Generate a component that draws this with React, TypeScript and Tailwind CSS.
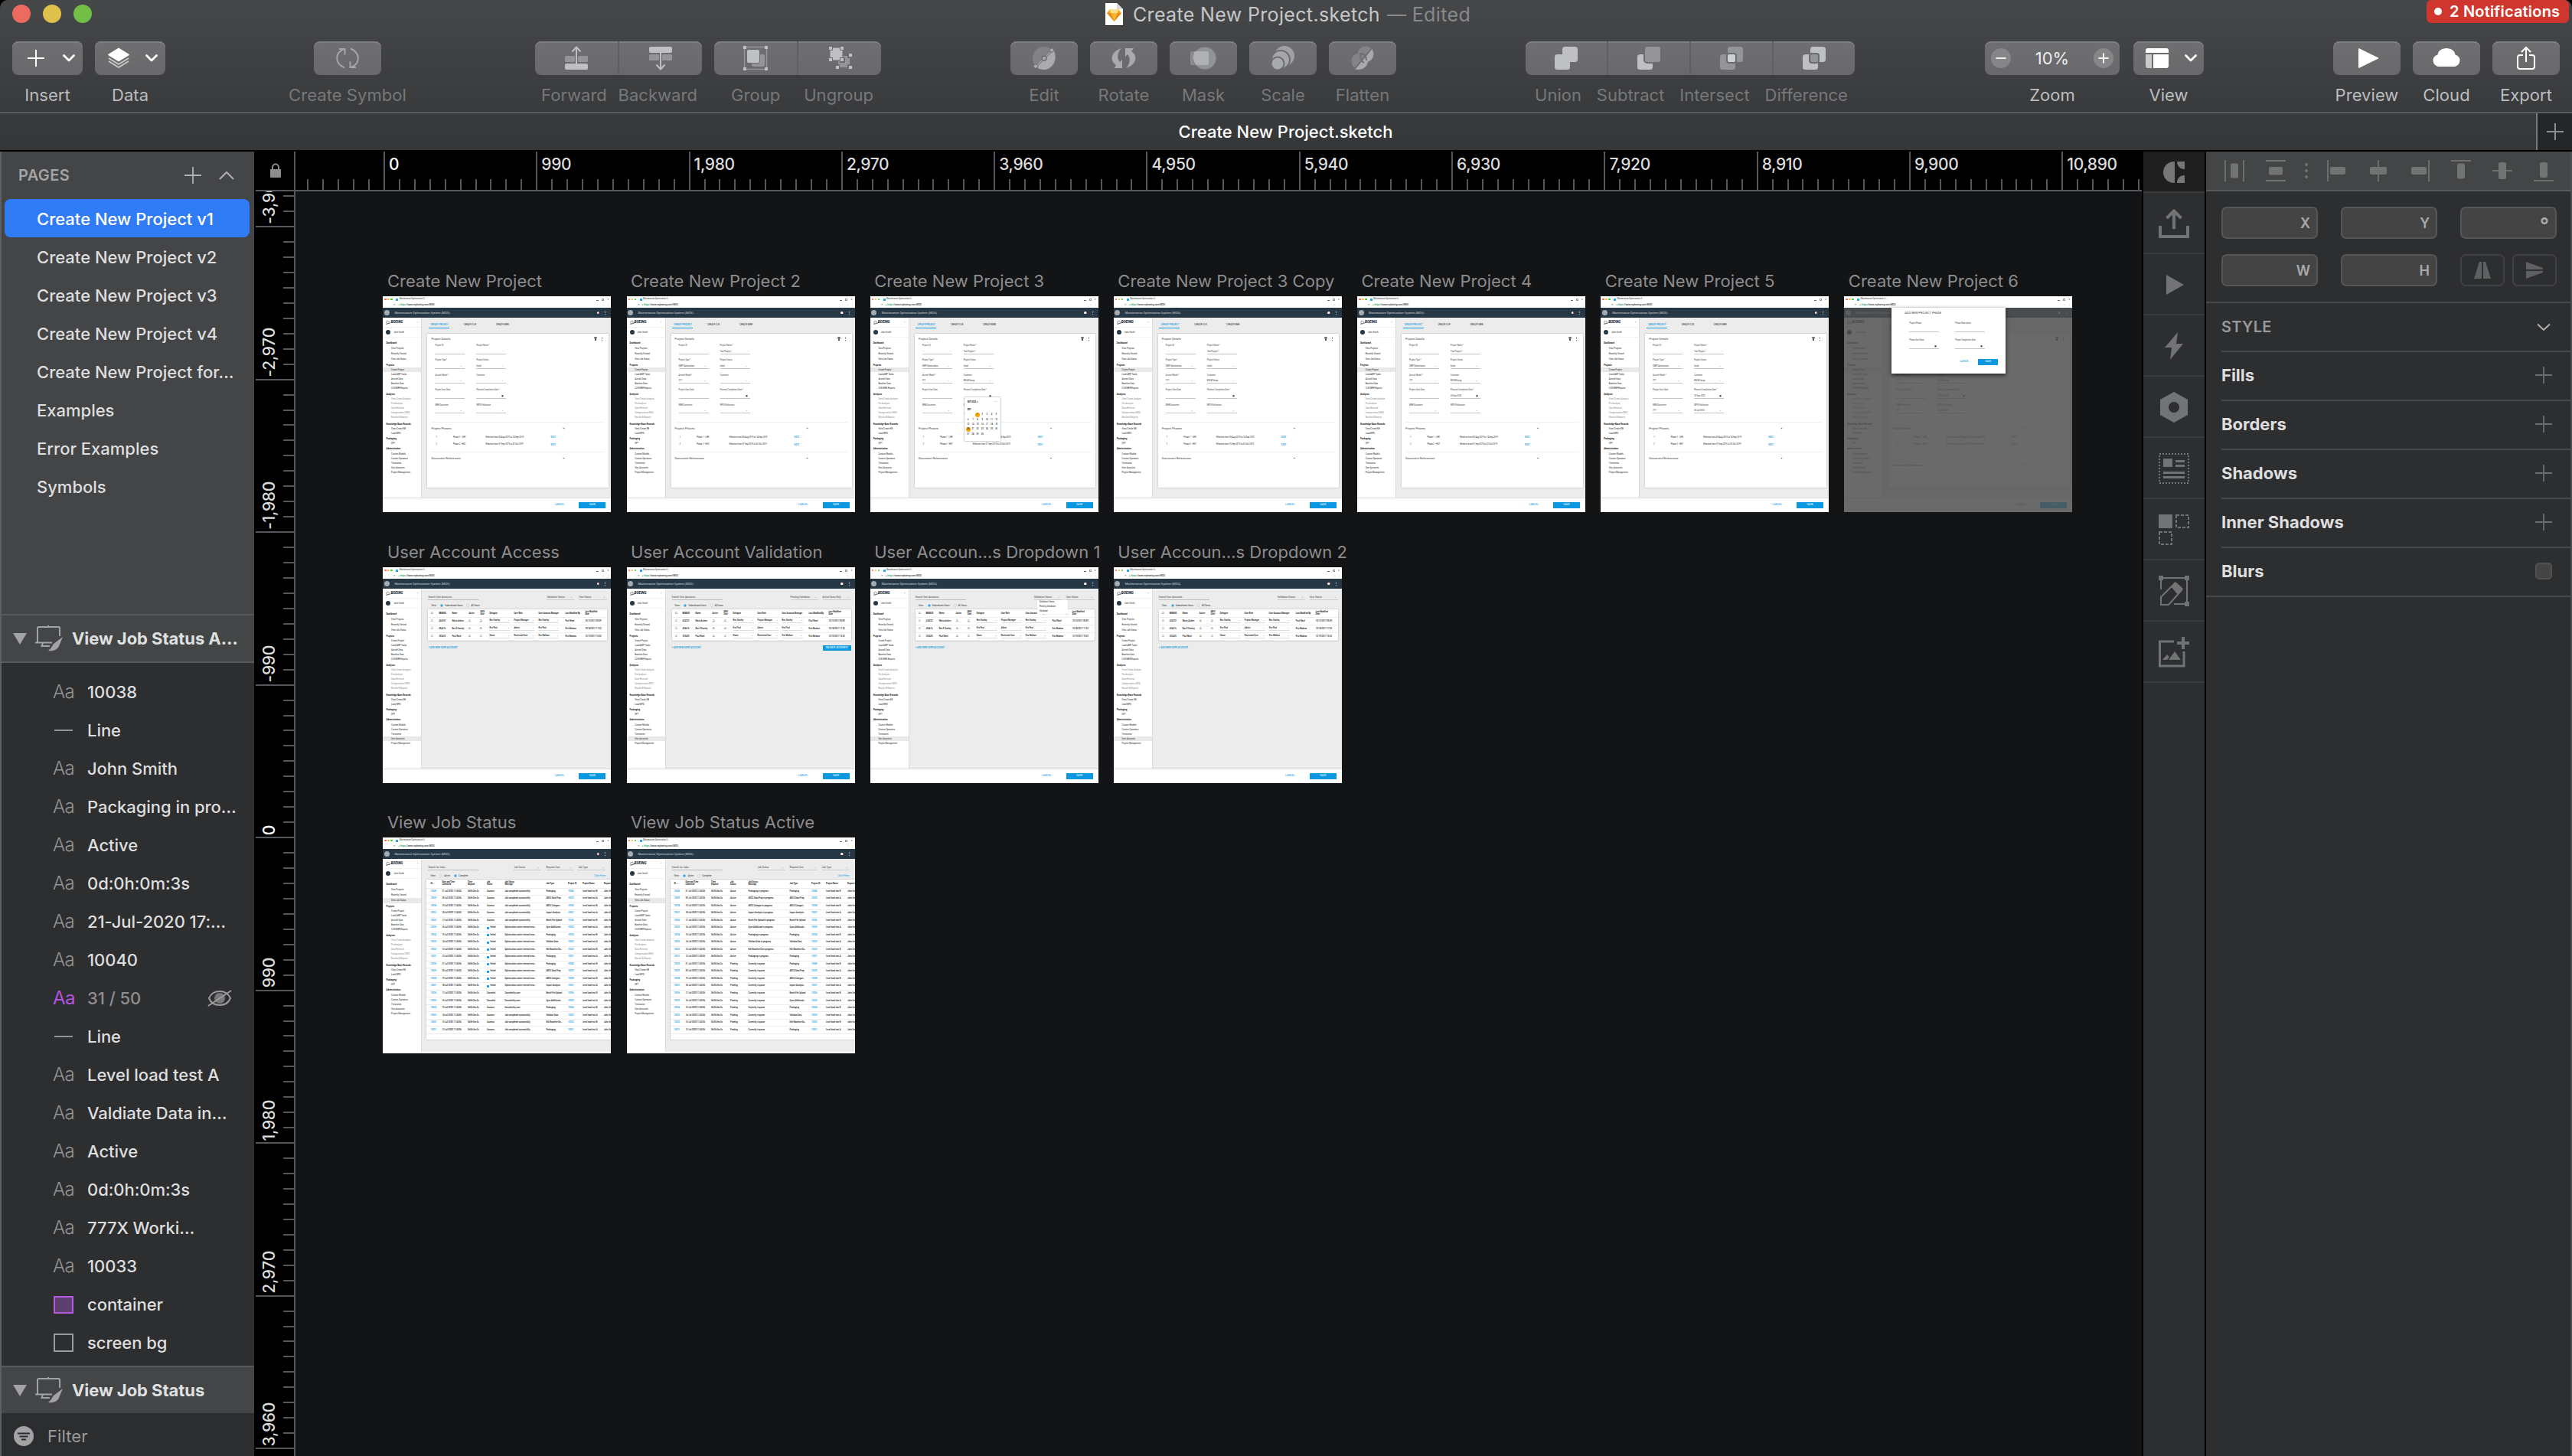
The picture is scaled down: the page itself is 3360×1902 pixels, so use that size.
import React from "react";

/* ---------- toolbar ---------- */

const BTN =
  "flex h-[44px] shrink-0 items-center justify-center bg-gradient-to-b from-[#6e6f71] to-[#69696c] shadow-[inset_0_2px_0_#7d7e80]";

function Ico({ children, w = 44, className = "" }: { children: React.ReactNode; w?: number; className?: string }) {
  return (
    <svg width={w} height={44} viewBox={`0 0 ${w} 44`} fill="none" className={"shrink-0 " + className}>
      {children}
    </svg>
  );
}

const L = "#bfc0c2";
const D = "#949597";

function Caret() {
  return (
    <svg width="16" height="10" viewBox="0 0 16 10" fill="none" className="shrink-0">
      <path d="M1.5 1.5 8 8l6.500-6.500" stroke="#fff" strokeWidth="2.800" strokeLinecap="round" strokeLinejoin="round" />
    </svg>
  );
}

function Label({ children, dim }: { children: React.ReactNode; dim?: boolean }) {
  return (
    <span className={"whitespace-nowrap text-[22px] leading-[28px] tracking-[0.05px] " + (dim ? "text-[#77787a]" : "text-[#bcbdbf]")}>
      {children}
    </span>
  );
}

function Tool({ w, label, dim, children, ml }: { w: string; label: string; dim?: boolean; children: React.ReactNode; ml: string }) {
  return (
    <div className={`flex shrink-0 flex-col ${w} ${ml}`}>
      <div className={BTN + " rounded-[8px]"}>{children}</div>
      <div className="mt-[12px] flex justify-center">
        <Label dim={dim}>{label}</Label>
      </div>
    </div>
  );
}

function ToolGroup({ w, ml, labels, pad, children }: { w: string; ml: string; labels: string[]; pad: string; children: React.ReactNode[] }) {
  return (
    <div className={`flex shrink-0 flex-col ${w} ${ml}`}>
      <div className={BTN + " overflow-hidden rounded-[8px]"}>
        {children.map((c, i) => (
          <div key={i} className={"flex h-full flex-1 items-center justify-center " + (i ? "border-l-2 border-[#5e5f61]" : "")}>
            {c}
          </div>
        ))}
      </div>
      <div className={"mt-[12px] flex justify-between " + pad}>
        {labels.map((l) => (
          <Label key={l} dim>
            {l}
          </Label>
        ))}
      </div>
    </div>
  );
}

function BoolIcon({ a, b, mid }: { a: string; b: string; mid: string }) {
  return (
    <Ico>
      <rect x="7" y="17" width="20" height="20" rx="3.500" fill={a} />
      <rect x="17" y="7" width="20" height="20" rx="3.500" fill={b} />
      {!(a === b && mid === a) && <rect x="16" y="16" width="12" height="12" rx="3" fill={mid} stroke="#6b6c6e" strokeWidth="2" />}
    </Ico>
  );
}

function Toolbar() {
  return (
    <div className="flex h-[110px] pt-[18px]">
      <Tool w="w-[92px]" ml="ml-[16px]" label="Insert">
        <Ico w={40} className="mr-[15px]">
          <path d="M20 11v22M9 22h22" stroke="#fff" strokeWidth="2" />
        </Ico>
        <Caret />
      </Tool>
      <Tool w="w-[92px]" ml="ml-[16px]" label="Data">
        <Ico w={40} className="mr-[15px]">
          <path d="M7 26l13 8 13-8M7 22l13 8 13-8" stroke="#c9cacb" strokeWidth="1.800" strokeLinejoin="round" />
          <path d="M20 9.500 33 17.500 20 25.500 7 17.500z" fill="#fff" stroke="#fff" strokeWidth="1.500" strokeLinejoin="round" />
        </Ico>
        <Caret />
      </Tool>
      <Tool w="w-[88px]" ml="ml-[194px]" label="Create Symbol" dim>
        <Ico>
          <path d="M18 34.500C5 29 5 15 17.500 10M11 10h7.500v7.500M26 9.500c13 5.500 13 19.500.5 24.500M33 34h-7.500v-7.500" stroke="#a5a6a8" strokeWidth="2" />
        </Ico>
      </Tool>
      <ToolGroup w="w-[218px]" ml="ml-[201px]" labels={["Forward", "Backward"]} pad="pl-[8px] pr-[6px]">
        <Ico>
          <rect x="7" y="19" width="13" height="8" rx="1.500" fill={D} />
          <rect x="24" y="19" width="13" height="8" rx="1.500" fill={D} />
          <rect x="7" y="29" width="30" height="8" rx="2" fill={L} />
          <path d="M22 29V8M16.500 13.500 22 7.500l5.500 6" stroke={L} strokeWidth="2" />
        </Ico>
        <Ico>
          <rect x="7" y="17" width="13" height="8" rx="1.500" fill={D} />
          <rect x="24" y="17" width="13" height="8" rx="1.500" fill={D} />
          <rect x="7" y="7" width="30" height="8" rx="2" fill={L} />
          <path d="M22 15v21M16.500 30.500l5.500 6 5.500-6" stroke={L} strokeWidth="2" />
        </Ico>
      </ToolGroup>
      <ToolGroup w="w-[218px]" ml="ml-[16px]" labels={["Group", "Ungroup"]} pad="pl-[22px] pr-[10px]">
        <Ico>
          <rect x="7.500" y="7.500" width="29" height="29" stroke={D} strokeWidth="1.500" />
          <path d="M6 6h4v4H6zM34 6h4v4h-4zM6 34h4v4H6zM34 34h4v4h-4z" fill={L} />
          <rect x="17" y="17" width="17" height="16" rx="2" fill={D} />
          <rect x="10.500" y="10.500" width="17" height="18" rx="2.500" fill={L} stroke="#6b6c6e" />
        </Ico>
        <Ico>
          <rect x="20" y="19" width="15" height="15" rx="2" fill={D} />
          <rect x="9" y="8" width="17" height="17" rx="3" fill={L} stroke="#6b6c6e" />
          <path d="M6 5h7v7H6zM22 5h7v7h-7zM6 21h7v7H6zM22 21h7v7h-7zM32 15h7v7h-7zM15 30h7v7h-7zM32 30h7v7h-7z" fill="#6b6c6e" />
          <path d="M8 7h4v4H8zM23 7h4v4h-4zM8 22h4v4H8zM23 22h4v4h-4zM34 16h4v4h-4zM17 32h4v4h-4zM34 32h4v4h-4z" fill={L} />
        </Ico>
      </ToolGroup>
      <Tool w="w-[88px]" ml="ml-[169px]" label="Edit" dim>
        <Ico>
          <circle cx="22" cy="22" r="15" fill="#828385" />
          <path d="M35 12C40 24 32 37 22 37c-4 0-7-1-10-4l10-11z" fill="#a9aaac" />
          <path d="M11 33 33 11" stroke="#6b6c6e" strokeWidth="3" />
          <path d="M11 33 33 11" stroke="#a9aaac" strokeWidth="1.500" />
          <circle cx="22" cy="22" r="3" fill="#a9aaac" stroke="#6b6c6e" strokeWidth="1.500" />
          <circle cx="32" cy="11.500" r="2.700" fill="#a9aaac" stroke="#6b6c6e" />
          <circle cx="11" cy="32.500" r="2.700" fill="#a9aaac" stroke="#6b6c6e" />
        </Ico>
      </Tool>
      <Tool w="w-[88px]" ml="ml-[16px]" label="Rotate" dim>
        <Ico>
          <path d="M19 9C4 14 4 26 12 31l-2 4h10V24l-3 3c-4-4-4-12 2-18z" fill="#a9aaac" />
          <path d="M25 35c15-5 15-17 7-22l3-4H24v11l3-3c4 4 4 12-2 18z" fill="#a9aaac" />
        </Ico>
      </Tool>
      <Tool w="w-[88px]" ml="ml-[16px]" label="Mask" dim>
        <Ico>
          <rect x="5" y="13" width="24" height="18" rx="2" fill="#8b8c8e" />
          <circle cx="24" cy="22" r="15" fill="#929395" stroke="#737476" />
          <path d="M11 13h16a2 2 0 0 1 2 2v14a2 2 0 0 1-2 2H12.500a15 15 0 0 1-1.500-18z" fill="#afb0b2" />
        </Ico>
      </Tool>
      <Tool w="w-[88px]" ml="ml-[16px]" label="Scale" dim>
        <Ico>
          <circle cx="24" cy="19" r="13" fill="#a0a1a3" />
          <circle cx="19" cy="24" r="12" fill="#a5a6a8" stroke="#6b6c6e" strokeWidth="2" />
          <circle cx="15" cy="29" r="8.500" fill="#a9aaac" stroke="#6b6c6e" strokeWidth="2" />
        </Ico>
      </Tool>
      <Tool w="w-[88px]" ml="ml-[16px]" label="Flatten" dim>
        <Ico>
          <circle cx="26" cy="17" r="10.500" fill="#838486" />
          <circle cx="18" cy="26" r="10.500" fill="#838486" />
          <path d="M34 9.500c5 8 1 15-5 17-1 7-7 12-17 10z" fill="#a9aaac" />
          <path d="M11 37 35 8M18 16c4-1 9 2 9 9M20 15c-2 5 0 11 4 13" stroke="#6b6c6e" strokeWidth="1.800" />
        </Ico>
      </Tool>
      <ToolGroup w="w-[430px]" ml="ml-[169px]" labels={["Union", "Subtract", "Intersect", "Difference"]} pad="pl-[12px] pr-[9px]">
        <BoolIcon a={L} b={L} mid={L} />
        <Ico>
          <rect x="7" y="17" width="20" height="20" rx="3.500" fill={L} />
          <rect x="16" y="6" width="22" height="22" rx="4" fill={D} stroke="#6b6c6e" strokeWidth="2" />
        </Ico>
        <BoolIcon a={D} b={D} mid="#cfd0d2" />
        <BoolIcon a={L} b={L} mid={D} />
      </ToolGroup>
      <Tool w="w-[176px]" ml="ml-[170px]" label="Zoom">
        <div className="flex w-full items-center justify-between px-[8px]">
          <Ico w={26}>
            <circle cx="13" cy="22" r="13" fill="#858688" />
            <path d="M6.500 22h13" stroke="#f0f0f0" strokeWidth="2" />
          </Ico>
          <span className="text-[22px] leading-[28px] text-[#ededee]">10%</span>
          <Ico w={26}>
            <circle cx="13" cy="22" r="13" fill="#858688" />
            <path d="M6.500 22h13M13 15.500v13" stroke="#f0f0f0" strokeWidth="2" />
          </Ico>
        </div>
      </Tool>
      <Tool w="w-[92px]" ml="ml-[18px]" label="View">
        <Ico w={32} className="ml-[5px] mr-[20px]">
          <path d="M4 9h24a3 3 0 0 1 3 3v3H1v-3a3 3 0 0 1 3-3zM11 17h20v15a3 3 0 0 1-3 3H11z" fill="#fff" />
          <path d="M1 17h8v18H4a3 3 0 0 1-3-3z" fill="#c9cacb" />
        </Ico>
        <Caret />
      </Tool>
      <Tool w="w-[88px]" ml="ml-[169px]" label="Preview">
        <Ico className="ml-[2px]">
          <path d="M10.500 9.500 36 22 10.500 34.500z" fill="#fff" stroke="#fff" strokeLinejoin="round" />
        </Ico>
      </Tool>
      <Tool w="w-[88px]" ml="ml-[16px]" label="Cloud">
        <Ico>
          <path d="M11.500 33a8.500 8 0 0 1-1-15.500C11 12.500 16 9 22 9s11 3.500 11.500 8.500a8.500 8 0 0 1-1 15.500z" fill="#fff" />
        </Ico>
      </Tool>
      <Tool w="w-[88px]" ml="ml-[16px]" label="Export">
        <Ico>
          <path d="M18 18h-4a3 3 0 0 0-3 3v12a3 3 0 0 0 3 3h16a3 3 0 0 0 3-3V21a3 3 0 0 0-3-3h-4M22 27V8M16 14l6-6 6 6" stroke="#fff" strokeWidth="2" />
        </Ico>
      </Tool>
    </div>
  );
}

function TitleBar() {
  return (
    <div className="relative flex h-[36px] items-center justify-center">
      <div className="absolute left-[16px] top-[6px] flex gap-[16px]">
        <i className="size-[24px] rounded-full bg-[#ed6a5e]" />
        <i className="size-[24px] rounded-full bg-[#e0c04c]" />
        <i className="size-[24px] rounded-full bg-[#72be47]" />
      </div>
      <div className="flex items-center pl-[5px] pt-[2px]">
        <svg width="24" height="30" viewBox="0 0 24 30" className="mr-[12px]">
          <path d="M0 0h15l8 8v21H0z" fill="#fff" />
          <path d="M15 0v8h8z" fill="#d8d8d8" />
          <path d="M0 29h24v1H0z" fill="#222" />
          <path d="M6 8h11l4 5-9.500 11L2 13z" fill="#f6a623" />
          <path d="M7 13h9l-4.500 11z" fill="#fbb72f" />
          <path d="M6 8h11l-1 5H7z" fill="#fde08a" />
          <path d="M2 13h5l4.500 11zM21 13h-5l-4.500 11z" fill="#e88a1a" />
        </svg>
        <span className="whitespace-nowrap text-[25px] leading-[36px] tracking-[0.35px] text-[#c6c7c8]">Create New Project.sketch</span>
        <span className="ml-[9px] whitespace-nowrap text-[25px] leading-[36px] tracking-[0.35px] text-[#88898b]">— Edited</span>
      </div>
      <div className="absolute right-[4px] top-0 flex h-[30px] w-[186px] items-center rounded-[6px] bg-[#cf372e] pl-[10px]">
        <i className="size-[10px] rounded-full bg-white" />
        <span className="ml-[10px] whitespace-nowrap text-[20px] font-semibold leading-[30px] tracking-[0.2px] text-white">2 Notifications</span>
      </div>
    </div>
  );
}

/* ---------- left sidebar ---------- */

const PAGES = [
  "Create New Project v1",
  "Create New Project v2",
  "Create New Project v3",
  "Create New Project v4",
  "Create New Project for…",
  "Examples",
  "Error Examples",
  "Symbols",
];

type Layer = { k: "t" | "l" | "p" | "c" | "r"; n: string };
const LAYERS: Layer[] = [
  { k: "t", n: "10038" },
  { k: "l", n: "Line" },
  { k: "t", n: "John Smith" },
  { k: "t", n: "Packaging in pro…" },
  { k: "t", n: "Active" },
  { k: "t", n: "0d:0h:0m:3s" },
  { k: "t", n: "21-Jul-2020 17:…" },
  { k: "t", n: "10040" },
  { k: "p", n: "31 / 50" },
  { k: "l", n: "Line" },
  { k: "t", n: "Level load test A" },
  { k: "t", n: "Valdiate Data in…" },
  { k: "t", n: "Active" },
  { k: "t", n: "0d:0h:0m:3s" },
  { k: "t", n: "777X Worki…" },
  { k: "t", n: "10033" },
  { k: "c", n: "container" },
  { k: "r", n: "screen bg" },
];

function GroupHeader({ title }: { title: string }) {
  return (
    <div className="flex h-full items-center pl-[15px]">
      <svg width="18" height="15" viewBox="0 0 18 15">
        <path d="M0 0h18L9 15z" fill="#a2a3a4" />
      </svg>
      <svg width="38" height="36" viewBox="0 0 38 36" fill="none" className="ml-[10px] mr-[11px]">
        <path d="M4 23V4.500A1.500 1.500 0 0 1 5.500 3h26A1.500 1.500 0 0 1 33 4.500V15M1 23.500h22M18 1v2M11 24l-2 5M10 28h10" stroke="#a2a3a4" strokeWidth="2" />
        <path d="M37 16 25 25c-2 3-3 6-7 9 6 1 12-1 14-6z" fill="#a2a3a4" />
      </svg>
      <span className="whitespace-nowrap text-[22px] font-bold leading-[28px] tracking-[-0.05px] text-[#dfe0e0]">{title}</span>
    </div>
  );
}

function LayerIcon({ k }: { k: Layer["k"] }) {
  if (k === "l") return <i className="ml-[2px] h-[2px] w-[24px] bg-[#929394]" />;
  if (k === "c") return <i className="ml-[1px] h-[23px] w-[26px] border-2 border-[#b45be0] bg-[#5e4070]" />;
  if (k === "r") return <i className="ml-[1px] h-[24px] w-[26px] border-2 border-[#9a9b9c]" />;
  return (
    <span className={"text-[24px] leading-[28px] tracking-[-0.6px] " + (k === "p" ? "font-normal text-[#b553e0]" : "font-light text-[#939495]")}>Aa</span>
  );
}

function Sidebar() {
  return (
    <div className="flex w-[332px] shrink-0 flex-col border-l-2 border-[#5e5f61] bg-[#444547]">
      <div className="flex h-[604px] flex-col">
        <div className="flex h-[62px] items-center pl-[22px]">
          <span className="w-[216px] text-[20px] font-semibold leading-[24px] tracking-[0.4px] text-[#a3a4a5]">PAGES</span>
          <svg width="24" height="24" viewBox="0 0 24 24" className="mr-[22px]">
            <path d="M12 1v22M1 12h22" stroke="#b0b1b2" strokeWidth="1.800" />
          </svg>
          <svg width="20" height="12" viewBox="0 0 20 12" fill="none">
            <path d="M1 11l9-9 9 9" stroke="#b0b1b2" strokeWidth="2" />
          </svg>
        </div>
        {PAGES.map((p, i) => (
          <div
            key={p}
            className={
              "mx-[4px] mr-[6px] flex h-[50px] items-center whitespace-nowrap rounded-[8px] pl-[42px] pt-[2px] text-[22px] font-medium " +
              (i === 0 ? "bg-[#2f7cf6] text-white" : "text-[#dededf]")
            }
          >
            {p}
          </div>
        ))}
      </div>
      <div className="h-[64px] shrink-0 border-y-2 border-[#58595b]">
        <GroupHeader title="View Job Status A…" />
      </div>
      <div className="h-[918px] shrink-0 bg-[#2d2e30] pt-[13px]">
        {LAYERS.map((l, i) => (
          <div key={i} className="flex h-[50px] items-center pl-[67px]">
            <div className="flex w-[45px] items-center">
              <LayerIcon k={l.k} />
            </div>
            <span className={"whitespace-nowrap text-[22px] font-medium leading-[28px] tracking-[-0.05px] " + (l.k === "p" ? "text-[#8e8f90]" : "text-[#dededf]")}>
              {l.n}
            </span>
            {l.k === "p" && (
              <svg width="32" height="24" viewBox="0 0 32 24" fill="none" className="ml-auto mr-[29px]">
                <circle cx="16" cy="12" r="7" fill="#77787a" />
                <path d="M2 12C7 0 25 0 30 12 25 24 7 24 2 12z" stroke="#9a9b9c" strokeWidth="2" />
                <path d="M1 22 31 2" stroke="#9a9b9c" strokeWidth="2" />
              </svg>
            )}
          </div>
        ))}
      </div>
      <div className="h-[62px] shrink-0 border-t-2 border-[#58595b]">
        <GroupHeader title="View Job Status" />
      </div>
      <div className="flex flex-1 items-center bg-[#2c2d2e] pl-[16px] pt-[4px]">
        <svg width="26" height="26" viewBox="0 0 26 26">
          <circle cx="13" cy="13" r="13" fill="#a2a3a4" />
          <path d="M5 9.500h16M7.500 13.500h11M10 17.500h6" stroke="#2c2d2e" strokeWidth="1.800" />
        </svg>
        <span className="ml-[18px] text-[22px] leading-[28px] tracking-[0.1px] text-[#9a9b9c]">Filter</span>
      </div>
    </div>
  );
}

/* ---------- rulers ---------- */

const H_LABELS = ["0", "990", "1,980", "2,970", "3,960", "4,950", "5,940", "6,930", "7,920", "8,910", "9,900", "10,890"];
const V_LABELS = ["-2,970", "-1,980", "-990", "0", "990", "1,980", "2,970", "3,960"];

function HTicks({ n }: { n: number }) {
  return (
    <div className="flex h-[14px]">
      {Array.from({ length: n }, (_, i) => (
        <i key={i} className="h-full w-[19.93px] shrink-0 border-r-2 border-[#55575a]" />
      ))}
    </div>
  );
}

function HRuler() {
  return (
    <div className="flex h-[52px] shrink-0 overflow-hidden border-b-2 border-[#55575a] bg-black">
      <div className="flex w-[115px] shrink-0 items-end justify-end pr-[18px]">
        <HTicks n={5} />
      </div>
      {H_LABELS.map((l) => (
        <div key={l} className="flex w-[199.3px] shrink-0 flex-col justify-between border-l-2 border-[#55575a]">
          <span className={"pl-[5px] pt-[3px] text-[21px] font-medium leading-[28px] tracking-[-0.35px] " + (l === "0" ? "text-white" : "text-[#dcdcdc]")}>{l}</span>
          <HTicks n={9} />
        </div>
      ))}
    </div>
  );
}

function VLabel({ t }: { t: string }) {
  return (
    <span
      className={
        "ml-[4px] rotate-180 pt-[2px] text-[21px] font-medium leading-[28px] tracking-[-0.3px] [writing-mode:vertical-rl] " +
        (t === "0" ? "text-white" : "text-[#dcdcdc]")
      }
    >
      {t}
    </span>
  );
}

function VTicks({ n }: { n: number }) {
  return (
    <div className="flex w-[14px] flex-col justify-end">
      {Array.from({ length: n }, (_, i) => (
        <i key={i} className="h-[19.95px] w-full shrink-0 border-t-2 border-[#55575a]" />
      ))}
    </div>
  );
}

function VRuler() {
  return (
    <div className="flex w-[54px] shrink-0 flex-col bg-black pl-[2px]">
      <div className="flex h-[52px] shrink-0 items-center justify-center border-b-2 border-r-2 border-[#55575a] pl-[2px]">
        <svg width="14" height="20" viewBox="0 0 14 20" fill="none">
          <path d="M3 9V5.500a4 4 0 0 1 8 0V9" stroke="#8b8c8d" strokeWidth="2" />
          <rect y="8" width="14" height="11" rx="1" fill="#8b8c8d" />
        </svg>
      </div>
      <div className="flex flex-1 flex-col overflow-hidden border-r-2 border-[#55575a]">
        <div className="flex h-[47px] shrink-0 items-end justify-between overflow-hidden border-b-2 border-[#55575a]">
          <VLabel t="-3,960" />
          <VTicks n={2} />
        </div>
        {V_LABELS.map((l) => (
          <div key={l} className="flex h-[199.5px] shrink-0 items-end justify-between border-b-2 border-[#55575a]">
            <VLabel t={l} />
            <VTicks n={9} />
          </div>
        ))}
      </div>
    </div>
  );
}

/* ---------- artboard thumbnails ---------- */

const NAV: { h: string; items: string[]; dim?: boolean; mt: string; row: string }[] = [
  { h: "Dashboard", items: ["View Projects", "Recently Viewed", "View Job Status"], mt: "mt-[3.500px]", row: "h-[7.400px]" },
  { h: "Projects", items: ["Create Project", "Load AMP Tasks", "Aircraft Data", "Baseline Data", "CLR/MRR Reports"], mt: "mt-[0.600px]", row: "h-[6px]" },
  { h: "Analyses", items: ["View/Create Analysis", "Pre-Analysis", "Data Retrieval", "Categorization/MOS", "Results & Reports"], dim: true, mt: "mt-[2px]", row: "h-[6px]" },
  { h: "Knowledge Base Records", items: ["View/Create KB", "Load MPD"], mt: "mt-[2px]", row: "h-[6px]" },
  { h: "Packaging", items: ["OPT"], mt: "mt-[1.100px]", row: "h-[6px]" },
  { h: "Administration", items: ["Custom Models", "Custom Operators", "Timezones", "User Accounts", "Project Management"], mt: "mt-[1px]", row: "h-[6px]" },
];

function MiniNav({ active }: { active: string }) {
  return (
    <div className="flex w-[51px] shrink-0 flex-col border-r border-[#dcdcdc] bg-white text-[2.700px] text-[#222]">
      <div className="flex h-[13px] items-center border-b border-[#f2f2f2] pl-[4px]">
        <svg width="24" height="6" viewBox="0 0 24 6" fill="none">
          <circle cx="2.500" cy="3" r="1.800" stroke="#4c5a66" strokeWidth=".6" />
          <path d="M0 5.500 6 4" stroke="#4c5a66" strokeWidth=".7" />
        </svg>
        <span className="-ml-[18px] text-[4.600px] font-black italic text-[#1f2f3e]">BOEING</span>
        <span className="ml-auto mr-[4px] text-[4px]">‹</span>
      </div>
      <div className="flex h-[13px] items-center border-b border-[#f4f4f4] pl-[4px]">
        <i className="size-[6px] rounded-full bg-[#263746]" />
        <span className="ml-[4px]">John Smith</span>
      </div>
      {NAV.map((g) => (
        <div key={g.h} className={"flex flex-col " + g.mt}>
          <div className="flex h-[6.400px] items-center whitespace-nowrap pl-[4px] text-[2.850px] font-bold text-[#222]">{g.h}</div>
          {g.items.map((it) => (
            <div
              key={it}
              className={`flex items-center whitespace-nowrap pl-[10.700px] ${g.row} ${g.dim ? "text-[#888]" : ""} ${it === active ? "bg-[#e8e8e8]" : ""}`}
            >
              {it}
            </div>
          ))}
        </div>
      ))}
    </div>
  );
}

function Chrome() {
  return (
    <div className="flex h-[15px] shrink-0 flex-col bg-white text-[3px] text-[#666]">
      <div className="flex h-[8px] items-center gap-[1.400px] pl-[2px] pr-[3px]">
        <i className="size-[2.600px] rounded-full bg-[#ff5f57]" />
        <i className="size-[2.600px] rounded-full bg-[#febc2e]" />
        <i className="size-[2.600px] rounded-full bg-[#28c840]" />
        <i className="ml-[3px] size-[3px] bg-[#23a9e8]" />
        <span className="whitespace-nowrap text-[2.600px] text-[#333]">Maintenance Optimization S…</span>
        <span className="ml-auto flex items-center gap-[4px]">
          <i className="mt-[2px] h-[0.700px] w-[3px] bg-[#666]" />
          <i className="size-[3px] border border-[#999]" />
          <span className="text-[4px]">×</span>
        </span>
      </div>
      <div className="flex h-[7px] items-center gap-[3px] pl-[2px] pr-[2px]">
        <span>←</span>
        <span className="text-[#bbb]">→</span>
        <span>⟳</span>
        <span className="whitespace-nowrap font-medium text-[#333]">
          <span className="text-[#159a55]">● https:</span>//www.myboeing.com/MOS
        </span>
        <span className="ml-auto">☆</span>
        <span className="text-[#e8b02e]">⋮</span>
      </div>
    </div>
  );
}

function AppBar() {
  return (
    <div className="flex h-[13px] shrink-0 items-center bg-[#263746] pl-[1.500px] pr-[5px]">
      <i className="size-[7px] rounded-full bg-[#a5acb2]" />
      <span className="ml-[6.500px] whitespace-nowrap text-[3.950px] text-[#cfd5da]">Maintenance Optimization System (MOS)</span>
      <span className="ml-auto flex items-center gap-[5px]">
        <i className="size-[3.500px] rounded-full border-r-[1.500px] border-[#e0424a] bg-white" />
        <span className="text-[5px] leading-none text-white">⋮</span>
      </span>
    </div>
  );
}

function Footer() {
  return (
    <div className="flex h-[19px] shrink-0 items-center justify-end border-t border-[#dcdcdc] bg-white pr-[7px] text-[3.400px] text-[#0b98e0]">
      <span className="mr-[19px]">CANCEL</span>
      <span className="flex h-[8px] w-[35px] items-center justify-center bg-[#0b98e0] text-white">SAVE</span>
    </div>
  );
}

function Field({ label, value = "", req, caret }: { label: string; value?: string; req?: boolean; caret?: string }) {
  return (
    <div className="flex h-[19.400px] w-[39px] flex-col">
      <span className="whitespace-nowrap text-[2.550px] leading-[6px] text-[#444]">
        {label} {req && <span className="text-[#e0242a]">*</span>}
      </span>
      <span className="flex h-[7.500px] items-end justify-between border-b border-[#c4c4c4] pr-[3px] text-[2.550px] leading-[5px] text-[#333]">
        <span className="whitespace-nowrap">{value}</span>
        <span>{caret}</span>
      </span>
    </div>
  );
}

type FormData = { name?: string; type?: string; model?: string; customer?: string; done?: string; doc?: string; pub?: string };

function ProjectForm({ d, docGap }: { d: FormData; docGap?: boolean }) {
  return (
    <div className="flex flex-1 flex-col bg-[#ececec] pl-[7px] pr-[3.500px]">
      <div className="flex h-[21px] pl-[1.500px] pt-[6px] text-[2.850px] leading-[6px] text-[#222]">
        <span className="mr-[19px] h-[8px] w-[27px] whitespace-nowrap border-b border-[#0b98e0] pl-[2.500px] font-medium text-[#0b98e0]">CREATE PROJECT</span>
        <span className="w-[42px]">CREATE CLR</span>
        <span>CREATE MRR</span>
      </div>
      <div className="flex h-[201px] flex-col bg-white px-[5px] text-[#444] shadow-[0_0_1.500px_#999]">
        <div className="flex h-[13px] items-center">
          <span className="text-[3.900px]">Project Details</span>
          <svg width="14" height="5" viewBox="0 0 14 5" className="ml-auto mr-[1px]">
            <path d="M1 0h4v1H1zM3 1l2 2H4v2H2V3H1z" fill="#555" />
            <path d="M11 0h1v1h-1zM11 2h1v1h-1zM11 4h1v1h-1z" fill="#777" />
          </svg>
        </div>
        <div className="flex gap-[15px] pl-[5px]">
          <div>
            <Field label="Project ID" />
            <Field label="Project Type" req caret="⌄" value={d.type} />
            <Field label="Aircraft Model" req caret="⌄" value={d.model} />
            <Field label="Project Start Date" />
            <Field label="MRB Document" caret="⌄" value={d.doc} />
          </div>
          <div>
            <Field label="Project Name" req value={d.name} />
            <Field label="Project Status" caret="⌄" value="Initial" />
            <Field label="Customer" caret="⌄" value={d.customer} />
            <Field label="Planned Completion Date" req caret="▣" value={d.done} />
            <Field label="MPD Publication" caret="⌄" value={d.pub} />
          </div>
        </div>
        <div className="mt-[5px] flex h-[16px] items-center border-t border-[#f0f0f0] text-[3.900px]">
          <span className="w-[172px]">Project Phases</span>
          <span>+</span>
        </div>
        {[
          ["1", "Phase 1 - LHR", "Effective from 05-Aug-2019 to 14-Sep-2019"],
          ["2", "Phase 2 - HGT", "Effective from 01-Sep-2019 to 02-Oct-2019"],
        ].map((r) => (
          <div key={r[0]} className="flex h-[9.500px] items-center pl-[6px] text-[2.600px] text-[#222]">
            <span className="w-[22.500px]">{r[0]}</span>
            <span className="w-[42.500px]">{r[1]}</span>
            <span className="w-[85px] whitespace-nowrap">{r[2]}</span>
            <span className="text-[3.200px] font-medium text-[#0b98e0]">EDIT</span>
          </div>
        ))}
        <div className={"flex h-[16px] items-center text-[3.900px] " + (docGap ? "mt-[14px]" : "mt-[4px] border-t border-[#f0f0f0]")}>
          <span className="w-[172px] whitespace-nowrap">Document References</span>
          <span>+</span>
        </div>
      </div>
    </div>
  );
}

function Pick({ t, w }: { t: string; w: string }) {
  return (
    <span className={"flex h-[6px] items-center justify-between whitespace-nowrap border-b border-[#ccc] pr-[2px] " + w}>
      {t}
      <span>⌄</span>
    </span>
  );
}

function Radio({ on, t }: { on?: boolean; t: string }) {
  return (
    <span className="flex items-center gap-[2px] whitespace-nowrap">
      <i className={"size-[4px] rounded-full border " + (on ? "border-[#8fc9ec] bg-[#0b98e0]" : "border-[#d0d0d0] bg-white")} />
      {t}
    </span>
  );
}

const ACC_COLS = ["w-[10px]", "w-[17px]", "w-[22px]", "w-[15px]", "w-[12px]", "w-[32px]", "w-[32px]", "w-[35px]", "w-[26px]", "w-[26px]"];
const ACC_HEAD = ["☐", "BEMSID", "Name", "Active", "MOS User", "Delegate", "User Role", "User Account Manager", "Last Modified By", "Last Modified Date"];
const ACC_ROWS = [
  ["☐", "434222", "Maria Anders", "☑", "☑", "Ben Stanley", "Project Manager", "Ben Stanley", "Paul Ward", "10/13/2017 05:09"],
  ["☐", "454676", "Ben E Stanley", "☑", "☑", "Eric Paul", "Admin", "Eric Paul", "Eric Madaca", "10/18/2017 17:33"],
  ["☐", "353435", "Paul Ward", "☑", "☐", "Name", "Restricted User", "Eric Wallace", "Eric Madaca", "12/19/2017 15:33"],
];

function Accounts({ validate, menu }: { validate?: boolean; menu?: boolean }) {
  return (
    <div className="relative flex flex-1 flex-col bg-[#ececec] pl-[8px] pr-[5px] text-[3.100px] text-[#444]">
      <div className="flex h-[17px] items-end gap-[6px] pb-[2px]">
        <span className="flex h-[6px] w-[66px] items-center border-b border-[#bbb]">Search User Accounts…</span>
        <span className="flex-1" />
        <Pick w="w-[36px]" t={validate ? "Pending Validation" : "Validation Status"} />
        <Pick w="w-[37px]" t={validate ? "Active Users Only" : "User Status"} />
      </div>
      <div className="flex h-[10px] items-center gap-[5px] pl-[4px] text-[2.850px] text-[#222]">
        <span>View:</span>
        <Radio on t="Subordinate Users" />
        <Radio t="All Users" />
      </div>
      <div className="h-[41px] bg-white shadow-[0_0_1.500px_#999]">
        <div className="flex h-[11px] items-center border-b border-[#eee] pl-[4px] text-[2.600px] font-semibold leading-[3px] text-[#111]">
          {ACC_HEAD.map((h, i) => (
            <span key={h + i} className={"shrink-0 pr-[6px] " + ACC_COLS[i]}>
              {h}
            </span>
          ))}
        </div>
        {ACC_ROWS.map((r, j) => (
          <div key={j} className="flex h-[10px] items-center border-b border-[#eee] pl-[4px] text-[2.600px] font-medium text-[#111]">
            {r.map((c, i) => (
              <span key={i} className={"flex shrink-0 whitespace-nowrap " + ACC_COLS[i]}>
                {i > 4 && i < 8 ? (
                  <span className="flex h-[5px] w-[27px] items-center justify-between border-b border-[#ddd]">
                    {c}
                    <span>⌄</span>
                  </span>
                ) : (
                  c
                )}
              </span>
            ))}
          </div>
        ))}
      </div>
      <div className="mt-[5px] flex h-[8px] items-center justify-between text-[3px] font-medium text-[#0b98e0]">
        <span>+ ADD NEW USER ACCOUNT</span>
        {validate && <span className="flex h-[7px] w-[37px] items-center justify-center bg-[#0b98e0] text-[2.900px] font-medium text-white">VALIDATE ACCOUNTS</span>}
      </div>
      {menu && (
        <div className="absolute right-[40px] top-[15px] flex h-[18px] w-[40px] flex-col justify-around bg-white pl-[3px] text-[2.600px] text-[#222] shadow-[0_0_1px_#bbb]">
          <span>Validation Status</span>
          <span>Pending Validation</span>
          <span>Validated</span>
        </div>
      )}
    </div>
  );
}

const JOB_COLS = ["w-[15px]", "w-[33.500px]", "w-[25px]", "w-[23.500px]", "w-[54px]", "w-[28.500px]", "w-[19px]", "w-[28px]", "w-[20px]"];
const JOB_HEAD = ["ID ⌄", "Date and Time submitted", "Time Elapsed", "Job Status", "Job Status Message", "Job Type", "Project ID", "Project Name", "Request User"];
const JOB_HEAD_PAD = ["", "pr-[12px]", "pr-[12px]", "pr-[15px]", "pr-[36px]", "", "", "", ""];
const JOB_TYPES = ["Packaging", "ARCS Data Prep", "ARCS Categori…", "Import Analysis", "Batch File Upload", "Sync Additional…", "Packaging", "Validate Data", "Edit Baseline Da…", "Packaging"];

function Jobs({ active }: { active?: boolean }) {
  const rows = Array.from({ length: 20 }, (_, i) => {
    const type = JOB_TYPES[i % 10];
    let status: string;
    let msg: string;
    if (active) {
      status = i < 10 ? "Active" : "Pending";
      msg = i < 10 ? type.replace("…", "") + " in progress" : "Currently in queue";
    } else if (i < 5 || i > 16) {
      status = "Success";
      msg = "Job completed successfully";
    } else if (i < 14) {
      status = "Failed";
      msg = "Optimization solver internal error…";
    } else {
      status = i === 16 ? "Success" : "Canceled";
      msg = "Canceled by user";
    }
    const day = 21 - (i % 10);
    return [String(10040 - i), `${day}-Jul-2020 17:43:06`, "0d:0h:0m:3s", status, msg, type, String(10040 - (i % 10)), `Level load test ${i % 2 ? "A" : "B"}`, "John Smith"];
  });
  return (
    <div className="flex flex-1 flex-col overflow-hidden bg-[#ececec] pl-[6px] text-[3.100px] text-[#444]">
      <div className="flex h-[17px] items-end gap-[6px] pb-[2px] pl-[2px] pr-[7px]">
        <span className="flex h-[6px] w-[66px] items-center border-b border-[#bbb]">Search for Jobs…</span>
        <span className="flex-1" />
        <Pick w="w-[36px]" t="Job Status" />
        <Pick w="w-[36px]" t="Request User" />
        <Pick w="w-[36px]" t="Job Type" />
      </div>
      <div className="flex h-[10px] items-center gap-[5px] pl-[5px] pr-[7px] text-[2.850px] text-[#222]">
        <span>View:</span>
        <Radio on={active} t="Active" />
        <Radio on={!active} t="Complete" />
        <span className="ml-auto text-[#0b98e0]">Clear Filters</span>
      </div>
      <div className="flex h-[209px] flex-col bg-white shadow-[0_0_1.500px_#999]">
        <div className="flex h-[11.500px] items-center border-b border-[#eee] pl-[5px] text-[2.600px] font-semibold leading-[3px] text-[#111]">
          {JOB_HEAD.map((h, i) => (
            <span key={h} className={`shrink-0 ${JOB_COLS[i]} ${JOB_HEAD_PAD[i]}`}>
              {h}
            </span>
          ))}
        </div>
        {rows.map((r, j) => (
          <div key={j} className="flex h-[9.530px] shrink-0 items-center overflow-hidden border-b border-[#eee] pl-[5px] text-[2.650px] font-medium text-[#111]">
            {r.map((c, i) => (
              <span key={i} className={`flex shrink-0 items-center whitespace-nowrap ${JOB_COLS[i]} ${i === 0 || i === 6 ? "text-[#0b98e0]" : ""}`}>
                {c === "Failed" && <i className="mr-[1.500px] size-[3px] rounded-[1px] bg-[#0b98e0]" />}
                {c}
              </span>
            ))}
          </div>
        ))}
      </div>
    </div>
  );
}

function Calendar() {
  return (
    <div className="absolute left-[123px] top-[132px] flex h-[57px] w-[47px] flex-col bg-white px-[2px] text-[2.600px] font-medium text-[#222] shadow-[0_0_2px_#888]">
      <div className="flex h-[13px] items-center justify-between px-[2px]">
        <b>SEP 2020 ▾</b>
        <span>‹ &nbsp;&nbsp;›</span>
      </div>
      <div className="flex h-[7px] items-center px-[2px] font-bold">SEP</div>
      {[["", "", "1", "2", "3", "4", "5"], ["6", "7", "8", "9", "10", "11", "12"], ["13", "14", "15", "16", "17", "18", "19"], ["20", "21", "22", "23", "24", "25", "26"], ["27", "28", "29", "30", "", "", ""]].map((w, i) => (
        <div key={i} className="grid h-[6.400px] grid-cols-7 items-center">
          {w.map((n, j) => (
            <span key={j} className={"flex h-[6.200px] items-center justify-center " + (n === "1" || n === "20" ? "rounded-full bg-[#f5a300]" : "")}>
              {n}
            </span>
          ))}
        </div>
      ))}
    </div>
  );
}

function PhaseDialog() {
  return (
    <div className="absolute left-[62px] top-[15px] flex h-[86px] w-[149px] flex-col bg-white pl-[17px] pr-[10px] text-[#444] shadow-[0_2px_5px_#222]">
      <span className="mt-[4px] text-[3.900px] leading-[6px]">ADD NEW PROJECT PHASE</span>
      <div className="mt-[8px] grid grid-cols-[39px_39px] gap-x-[21px] gap-y-[3px] pl-[6px]">
        <Field label="Project Phase" />
        <Field label="Phase Description" />
        <Field label="Phase Start Date" caret="▣" />
        <Field label="Phase Completion Date" caret="▣" />
      </div>
      <div className="mt-[7px] flex items-center justify-end text-[3.200px] text-[#0b98e0]">
        <span className="mr-[12px]">CANCEL</span>
        <span className="flex h-[8px] w-[26px] items-center justify-center bg-[#0b98e0] text-white">SAVE</span>
      </div>
    </div>
  );
}

type Kind = "form" | "accounts" | "jobs";
type Board = {
  title: string;
  col: number;
  row: number;
  kind: Kind;
  form?: FormData;
  cal?: boolean;
  modal?: boolean;
  validate?: boolean;
  menu?: boolean;
  active?: boolean;
};

const F2: FormData = { name: "Test Project 1", type: "OMP Optimization", model: "777" };
const F3: FormData = { ...F2, customer: "ROLM Group" };
const F5: FormData = { ...F3, done: "20-Sep-2020", doc: "777", pub: "20-Jul-2016" };

const BOARDS: Board[] = [
  { title: "Create New Project", col: 0, row: 0, kind: "form", form: {} },
  { title: "Create New Project 2", col: 1, row: 0, kind: "form", form: F2 },
  { title: "Create New Project 3", col: 2, row: 0, kind: "form", form: F3, cal: true },
  { title: "Create New Project 3 Copy", col: 3, row: 0, kind: "form", form: F3 },
  { title: "Create New Project 4", col: 4, row: 0, kind: "form", form: { ...F3, done: "20-Sep-2020" } },
  { title: "Create New Project 5", col: 5, row: 0, kind: "form", form: F5 },
  { title: "Create New Project 6", col: 6, row: 0, kind: "form", form: F5, modal: true },
  { title: "User Account Access", col: 0, row: 1, kind: "accounts" },
  { title: "User Account Validation", col: 1, row: 1, kind: "accounts", validate: true },
  { title: "User Accoun…s Dropdown 1", col: 2, row: 1, kind: "accounts", menu: true },
  { title: "User Accoun…s Dropdown 2", col: 3, row: 1, kind: "accounts" },
  { title: "View Job Status", col: 0, row: 2, kind: "jobs" },
  { title: "View Job Status Active", col: 1, row: 2, kind: "jobs", active: true },
];

const ACTIVE_NAV: Record<Kind, string> = { form: "Create Project", accounts: "User Accounts", jobs: "View Job Status" };
const ROW_TOP = [101, 455, 808];

function Artboard({ b }: { b: Board }) {
  return (
    <div className="absolute w-[298px]" style={{ left: 114.4 + b.col * 318.15, top: ROW_TOP[b.row] }}>
      <div className="h-[36px] whitespace-nowrap pl-[5.500px] text-[22px] leading-[32px] tracking-[0.03px] text-[#8d8d8e]">{b.title}</div>
      <div className="relative flex h-[282px] flex-col overflow-hidden bg-white font-[Roboto]">
        <Chrome />
        <AppBar />
        <div className="flex min-h-0 flex-1">
          <MiniNav active={ACTIVE_NAV[b.kind]} />
          {b.kind === "form" && <ProjectForm d={b.form ?? {}} docGap={b.modal} />}
          {b.kind === "accounts" && <Accounts validate={b.validate} menu={b.menu} />}
          {b.kind === "jobs" && <Jobs active={b.active} />}
        </div>
        {b.kind === "jobs" ? <div className="h-[2px] shrink-0 bg-white" /> : <Footer />}
        {b.cal && <Calendar />}
        {b.modal && <div className="absolute inset-x-0 bottom-0 top-[15px] bg-[#505050]/85" />}
        {b.modal && <PhaseDialog />}
      </div>
    </div>
  );
}

/* ---------- plugin strip ---------- */

const G = "#727374";

const STRIP: React.ReactNode[] = [
  <g key="up">
    <path d="M2 23v14h36V23" stroke={G} strokeWidth="4" />
    <path d="M20 27V4M10.500 13 20 3.500l9.500 9.500" stroke={G} strokeWidth="4" />
  </g>,
  <path key="play" d="M10 7 33 20 10 33z" fill={G} />,
  <path key="bolt" d="M25 2 8 22h9l-2 16 17-21h-9z" fill={G} />,
  <path key="hex" fillRule="evenodd" d="M20 0 38 10v20L20 40 2 30V10zM20 13a7 7 0 1 0 0 14 7 7 0 0 0 0-14z" fill={G} />,
  <g key="news">
    <rect x="1" y="1" width="38" height="38" stroke={G} strokeWidth="2" strokeDasharray="2 2" />
    <path d="M6 7h12v11H6zM22 9h12v3H22zM22 15h12v3H22zM6 24h28v3H6zM6 30h28v3H6z" fill={G} />
  </g>,
  <g key="grid">
    <path d="M0 0h18v18H0z" fill={G} />
    <rect x="23" y="1" width="16" height="16" stroke={G} strokeWidth="2" strokeDasharray="4 2" />
    <rect x="1" y="23" width="16" height="16" stroke={G} strokeWidth="2" strokeDasharray="4 2" />
  </g>,
  <g key="edit">
    <path d="M3 18V3h34v34H20" stroke={G} strokeWidth="2" />
    <path d="M0 0h6v6H0zM34 0h6v6h-6zM34 34h6v6h-6z" fill={G} />
    <path d="M3 38V28L21 10l9 9-17 19z" stroke={G} strokeWidth="2" />
    <path d="M16 14l6-6 10 9-7 8z" fill={G} />
  </g>,
  <g key="img">
    <path d="M20 6H1.500v32H33V19" stroke={G} strokeWidth="3" />
    <path d="M32 0v16M24 8h16" stroke={G} strokeWidth="4" />
    <path d="M5 30l6-7 3 3-3 4zM13 30l8-11 8 11z" fill={G} />
  </g>,
];

function PluginStrip() {
  return (
    <div className="flex w-[84px] shrink-0 flex-col border-x-2 border-black bg-[#2d2e30]">
      <div className="flex h-[52px] shrink-0 items-center justify-center bg-[#1f1f20] pt-[2px]">
        <svg width="28" height="28" viewBox="0 0 28 28">
          <path d="M15 0v28C-5 28-5 0 15 0zM18 0h10v10C22 10 18 6 18 0zM18 28h10V18c-6 0-10 4-10 10z" fill="#767676" />
        </svg>
      </div>
      {STRIP.map((s, i) => (
        <div key={i} className="flex h-[80px] shrink-0 items-center justify-center border-t-2 border-[#3b3c3e] pt-[2px]">
          <svg width="40" height="40" viewBox="0 0 40 40" fill="none">
            {s}
          </svg>
        </div>
      ))}
      <div className="border-t-2 border-[#3b3c3e]" />
    </div>
  );
}

/* ---------- inspector ---------- */

const C = "#727373";

function AlignIcon({ line, x, y, w, h }: { line: string; x: number; y: number; w: number; h: number }) {
  return (
    <svg width="26" height="28" viewBox="0 0 26 28" fill="none" className="mr-[28px] shrink-0">
      <path d={line} stroke={C} strokeWidth="1.800" />
      <rect x={x} y={y} width={w} height={h} rx="2" fill={C} />
    </svg>
  );
}

function AlignBar() {
  return (
    <div className="flex h-[52px] shrink-0 items-center overflow-hidden border-b-2 border-[#58595a] bg-[#444546] pl-[24px]">
      <AlignIcon line="M1 0v28M25 0v28" x={8} y={4.5} w={10} h={19} />
      <AlignIcon line="M0 1h26M0 27h26" x={4} y={9} w={18} h={10.5} />
      <svg width="4" height="20" viewBox="0 0 4 20" className="-ml-[3px] mr-[25px] shrink-0">
        <circle cx="2" cy="2" r="2" fill={C} />
        <circle cx="2" cy="10" r="2" fill={C} />
        <circle cx="2" cy="18" r="2" fill={C} />
      </svg>
      <AlignIcon line="M1 0v28" x={4} y={9} w={20} h={10} />
      <AlignIcon line="M13 0v28" x={2} y={9} w={22} h={10} />
      <AlignIcon line="M25 0v28" x={2} y={9} w={20} h={10} />
      <AlignIcon line="M0 1h26" x={8} y={4.5} w={10} h={20} />
      <AlignIcon line="M0 14h26" x={8} y={3} w={10} h={22} />
      <AlignIcon line="M0 27h26" x={8} y={3} w={10} h={20} />
    </div>
  );
}

function NumField({ t }: { t: string }) {
  return (
    <div className="flex h-[42px] w-[126px] items-center justify-end rounded-[7px] border-2 border-[#555657] bg-[#444445] pr-[8px] text-[#a9aaaa]">
      <span className={t === "°" ? "pt-[5px] text-[26px] font-semibold leading-[28px]" : "pt-[1px] text-[18px] font-semibold leading-[24px]"}>{t}</span>
    </div>
  );
}

function Inspector() {
  return (
    <div className="flex w-[478px] shrink-0 flex-col border-r-2 border-[#4c4d4e] bg-[#2d2e30]">
      <AlignBar />
      <div className="flex h-[144px] shrink-0 flex-col gap-[20px] pl-[20px] pt-[20px]">
        <div className="flex gap-[30px]">
          <NumField t="X" />
          <NumField t="Y" />
          <NumField t="°" />
        </div>
        <div className="flex gap-[30px]">
          <NumField t="W" />
          <NumField t="H" />
          <div className="flex gap-[10px]">
            <div className="flex h-[42px] w-[58px] items-center justify-center rounded-[7px] border-2 border-[#404143]">
              <svg width="22" height="22" viewBox="0 0 22 22">
                <path d="M10 0v22H0L7 0zM12 0v22h10L15 0z" fill="#5f6061" />
              </svg>
            </div>
            <div className="flex h-[42px] w-[58px] items-center justify-center rounded-[7px] border-2 border-[#404143]">
              <svg width="22" height="22" viewBox="0 0 22 22">
                <path d="M0 10V0l22 8v2zM0 12v10l22-8v-2z" fill="#5f6061" />
              </svg>
            </div>
          </div>
        </div>
      </div>
      <div className="flex h-[64px] shrink-0 items-center justify-between border-t-2 border-[#464748] pl-[20px] pr-[26px]">
        <span className="text-[20px] font-semibold tracking-[0.3px] text-[#989999]">STYLE</span>
        <svg width="18" height="11" viewBox="0 0 18 11" fill="none">
          <path d="M1 1.500 9 9l8-7.500" stroke="#b0b1b2" strokeWidth="2" />
        </svg>
      </div>
      {["Fills", "Borders", "Shadows", "Inner Shadows", "Blurs"].map((t) => (
        <div key={t} className="ml-[20px] flex h-[64px] shrink-0 items-center justify-between border-t-2 border-[#464748] pb-[2px] pr-[24px]">
          <span className="text-[22px] font-bold text-[#dededf]">{t}</span>
          {t === "Blurs" ? (
            <i className="size-[22px] rounded-[5px] border-2 border-[#505152] bg-[#444445]" />
          ) : (
            <svg width="22" height="22" viewBox="0 0 22 22">
              <path d="M11 0v22M0 11h22" stroke="#6c6d6e" strokeWidth="1.800" />
            </svg>
          )}
        </div>
      ))}
      <div className="border-t-2 border-[#464748]" />
    </div>
  );
}

export default function App() {
  return (
    <div className="flex h-[1902px] w-[3360px] flex-col overflow-hidden bg-black font-[Inter,sans-serif]">
      <div className="flex h-[198px] shrink-0 flex-col rounded-t-[10px] border-b-2 border-black bg-gradient-to-b from-[#464749] to-[#353638]">
        <TitleBar />
        <div className="h-[112px] border-b-2 border-[#5a5b5d]">
          <Toolbar />
        </div>
        <div className="flex flex-1">
          <div className="flex flex-1 items-center justify-center pl-[46px] text-[22px] font-medium text-white">Create New Project.sketch</div>
          <div className="flex w-[47px] items-center justify-center border-l-2 border-[#77787a] bg-[#252628]">
            <svg width="22" height="22" viewBox="0 0 22 22">
              <path d="M11 0v22M0 11h22" stroke="#8b8c8e" strokeWidth="2" />
            </svg>
          </div>
        </div>
      </div>
      <div className="flex min-h-0 flex-1">
        <Sidebar />
        <VRuler />
        <div className="flex w-[2412px] shrink-0 flex-col bg-[#131416]">
          <HRuler />
          <div className="relative flex-1 overflow-hidden">
            {BOARDS.map((b) => (
              <Artboard key={b.title} b={b} />
            ))}
          </div>
        </div>
        <PluginStrip />
        <Inspector />
      </div>
    </div>
  );
}
